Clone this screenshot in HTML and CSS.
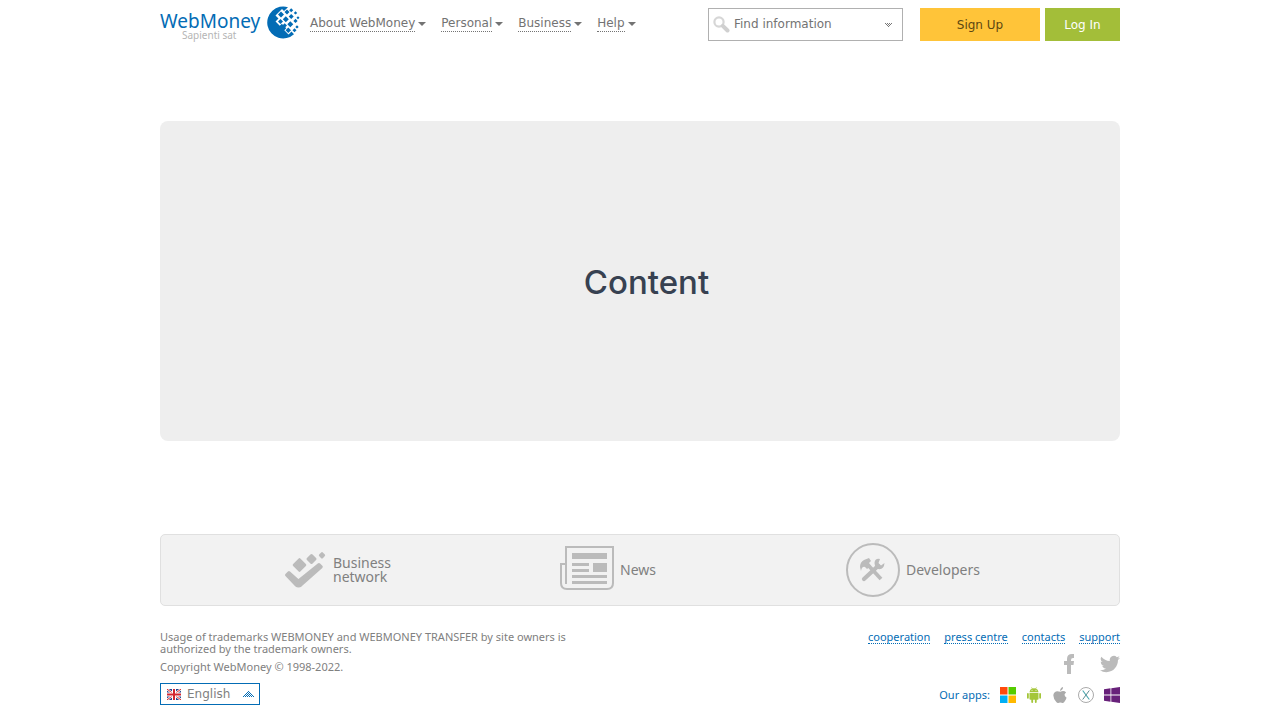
FILE: index.html
```html
<!DOCTYPE html>
<html lang="en">
<head>
<meta charset="utf-8">
<title>WebMoney</title>
<link rel="stylesheet" href="styles.css">
</head>
<body>
<div class="page">
  <header class="header">
    <a class="logo" href="#">
      <span class="logo-text"><span class="logo-name">WebMoney</span><span class="logo-tag">Sapienti sat</span></span>
      <svg class="logo-globe" viewBox="0 0 34 34" aria-hidden="true">
        <path fill="#036cb5" d="M22 1.200A16 16 0 1 0 28 28.300L25.500 25.500 22.500 28.500 18.300 24.300 20.300 22.300 15.800 17.800 13.800 19.800 9.500 15.500 12.500 12.500 9.500 9.500 13.500 5.500 16 3 18 5Z"/>
        <path fill="#036cb5" d="M15 5.500l3 3-3 3-3-3zM21 3.500l2.500 2.500-2.500 2.500-2.500-2.500zM19.800 10.300l3 3-3 3-3-3zM14.500 13l2.500 2.500-2.500 2.500-2.500-2.500zM25.200 8l2.500 2.500-2.500 2.500-2.500-2.500zM24.300 15.200l3 3-3 3-3-3zM22.300 21.500l2.700 2.700-2.700 2.700-2.700-2.700zM18.700 17.200l2.300 2.300-2.300 2.300-2.300-2.300z"/>
        <path fill="#036cb5" d="M25.200 2.200l2 2-2 2-2-2zM29.500 5.200l1.700 1.700-1.700 1.700-1.700-1.700zM29.500 12.800l2.100 2.100-2.100 2.100-2.100-2.100zM32 10.300l1.500 1.500-1.500 1.500-1.500-1.500zM31 19.200l1.700 1.700-1.700 1.700-1.700-1.700zM28.500 22.200l2 2-2 2-2-2z"/>
      </svg>
    </a>
    <nav class="nav">
      <a href="#"><span>About WebMoney</span></a>
      <a href="#"><span>Personal</span></a>
      <a href="#"><span>Business</span></a>
      <a href="#"><span>Help</span></a>
    </nav>
    <form class="search">
      <svg class="search-icon" viewBox="0 0 17 17" aria-hidden="true"><circle cx="6" cy="6" r="4.600" fill="none" stroke="#d6d6d6" stroke-width="2.200"/><path d="M9.800 9.800l4.700 4.700" stroke="#d0d0d0" stroke-width="4" stroke-linecap="round"/></svg>
      <input type="text" placeholder="Find information" aria-label="Find information">
      <button type="button" class="search-more" aria-label="Search options"><svg viewBox="0 0 7 4" shape-rendering="crispEdges"><path fill="#777" d="M0 0h1v1H0zM2 0h1v1H2zM4 0h1v1H4zM6 0h1v1H6zM1 1h1v1H1zM3 1h1v1H3zM5 1h1v1H5zM2 2h1v1H2zM4 2h1v1H4zM3 3h1v1H3z"/></svg></button>
    </form>
    <div class="actions">
      <button type="button" class="sign-up">Sign Up</button>
      <button type="button" class="log-in">Log In</button>
    </div>
  </header>

  <main class="content">Content</main>

  <footer>
    <div class="services">
      <a class="service" href="#">
        <svg class="network-icon" viewBox="0 0 42 38" aria-hidden="true"><g fill="#bbb" stroke="#bbb" stroke-width="3" stroke-linejoin="round"><path d="M15 8.700l5.300 5.300-5.300 5.300-5.300-5.300z"/><path d="M27 4.500l3.500 3.500-3.500 3.500-3.500-3.500z"/><path d="M37.500 2.700l1.600 1.600-1.600 1.600-1.600-1.600z"/><path d="M4.500 21.500l9.500 8.500 20.500-16.500 2.300 2.300L16.500 34q-2.500 2-5 0L2 24z"/></g></svg>
        <span>Business<br>network</span>
      </a>
      <a class="service" href="#">
        <svg class="news-icon" viewBox="0 0 54 44" aria-hidden="true"><path fill="none" stroke="#bbb" stroke-width="2" d="M6 38V1h47v36q0 6-6 6H7q-6 0-6-6V18h5"/><path fill="#bbb" d="M12 7h35v6H12zM12 17h17v3H12zM12 23h17v3H12zM33 17h14v9H33zM12 29h35v3H12zM12 35h35v3H12z"/></svg>
        <span>News</span>
      </a>
      <a class="service" href="#">
        <svg class="dev-icon" viewBox="0 0 54 54" aria-hidden="true"><circle cx="27" cy="27" r="26" fill="none" stroke="#bbb" stroke-width="2"/><g fill="none" stroke="#bbb"><path stroke-width="4.200" stroke-linecap="round" d="M18 36l14-13"/><path stroke-width="3.800" d="M22 22l13 14"/></g><path fill="#bbb" d="M14 24q0-5 4-7l5-2 2 3-2 2 2 3-4 3-2-2q-3-1-4 4zM34 16q-5-1-5.500 4l.5 3 3 3q6 1 6.500-6l-3.500 2.500-2.500-2.500z"/></svg>
        <span>Developers</span>
      </a>
    </div>

    <div class="legal">
      <div class="legal-text">
        <p>Usage of trademarks WEBMONEY and WEBMONEY TRANSFER by site owners is<br>authorized by the trademark owners.</p>
        <p>Copyright WebMoney © 1998-2022.</p>
        <button type="button" class="language">
          <svg class="flag" viewBox="0 0 14 11" aria-hidden="true"><path fill="#27448c" d="M0 0h14v11H0z"/><path stroke="#fff" stroke-width="2.200" d="M0 0l14 11M14 0L0 11"/><path stroke="#d22" d="M0 0l14 11M14 0L0 11"/><path stroke="#fff" stroke-width="4" d="M7 0v11M0 5.500h14"/><path stroke="#d22630" stroke-width="2" d="M7 0v11M0 5.500h14"/></svg>
          <span>English</span>
          <svg class="up" viewBox="0 0 11 6" shape-rendering="crispEdges" aria-hidden="true"><path fill="#036cb5" d="M5 0h1v1H5zM4 1h1v1H4zM6 1h1v1H6zM3 2h1v1H3zM5 2h1v1H5zM7 2h1v1H7zM2 3h1v1H2zM4 3h1v1H4zM6 3h1v1H6zM8 3h1v1H8zM1 4h1v1H1zM3 4h1v1H3zM5 4h1v1H5zM7 4h1v1H7zM9 4h1v1H9zM0 5h1v1H0zM2 5h1v1H2zM4 5h1v1H4zM6 5h1v1H6zM8 5h1v1H8zM10 5h1v1h-1z"/></svg>
        </button>
      </div>
      <div class="legal-side">
        <div class="links"><a href="#">cooperation</a><a href="#">press centre</a><a href="#">contacts</a><a href="#">support</a></div>
        <div class="social">
          <a href="#" aria-label="Facebook"><svg width="12" height="20" viewBox="0 0 12 20"><path fill="#bbb" d="M3 20v-9H0V7h3V5q0-5 5-5h2v4H9Q7 4 7 6v1h3l-.5 4H7v9z"/></svg></a>
          <a href="#" aria-label="Twitter"><svg width="20" height="18" viewBox="0 2 24 20"><path fill="#bbb" d="M23.950 4.570a10 10 0 0 1-2.820.770 4.960 4.960 0 0 0 2.160-2.720c-.950.550-2 .950-3.130 1.180a4.920 4.920 0 0 0-8.380 4.480A13.930 13.930 0 0 1 1.640 3.160a4.920 4.920 0 0 0 1.520 6.570 4.900 4.900 0 0 1-2.230-.610v.060a4.920 4.920 0 0 0 3.950 4.830 5 5 0 0 1-2.210.080 4.940 4.940 0 0 0 4.600 3.420A9.870 9.870 0 0 1 0 19.540a13.990 13.990 0 0 0 7.550 2.210c9.050 0 14-7.500 14-13.980 0-.210 0-.420-.020-.630a9.940 9.940 0 0 0 2.460-2.550z"/></svg></a>
        </div>
        <div class="apps">
          <span>Our apps:</span>
          <a href="#" aria-label="Microsoft"><svg width="16" height="16" viewBox="0 0 16 16"><path fill="#ff4a0c" d="M0 0h7.500v7.500H0z"/><path fill="#5c0" d="M8.500 0H16v7.500H8.500z"/><path fill="#00aff5" d="M0 8.500h7.500V16H0z"/><path fill="#ffb900" d="M8.500 8.500H16V16H8.500z"/></svg></a>
          <a href="#" aria-label="Android"><svg width="16" height="16" viewBox="0 0 16 16"><path fill="#a4c639" d="M3.500 5q.4-2.500 2.500-3.400L5.200.5 5.700.2l.9 1.200q1.400-.4 2.800 0L10.300.2l.5.300-.8 1.100Q12.100 2.500 12.500 5zM3.500 5.700h9v6.300q0 .8-1 .8h-.8V15q0 1-.9 1t-.9-1v-2.200H7.100V15q0 1-.9 1t-.9-1v-2.200h-.8q-1 0-1-.8zM1 7q0-1 .9-1t.9 1v3.700q0 1-.9 1t-.9-1zM13.200 7q0-1 .9-1t.9 1v3.700q0 1-.9 1t-.9-1z"/><circle cx="6" cy="3.300" r=".5" fill="#fff"/><circle cx="10" cy="3.300" r=".5" fill="#fff"/></svg></a>
          <a href="#" aria-label="Apple"><svg width="16" height="16" viewBox="0 0 16 16"><path fill="#aaa" d="M11 0q.2 3-2.900 4Q7.900 1 11 0zM8.300 4.700q3.700-1.600 5.800.7-3.400 2.400.5 5.400-.8 2.300-2.500 4.500-1 1-2.500.4-1.300-.5-2.600 0-1.600.7-2.700-.6Q1 11.200 1.400 7.700 2.100 4.300 5.500 4.200q1 .1 2.800.5z"/></svg></a>
          <a href="#" aria-label="OS X"><svg width="16" height="16" viewBox="0 0 16 16"><circle cx="8" cy="8" r="7.500" fill="#fff" stroke="#aaa"/><path fill="none" stroke="#45a5ad" stroke-width="1.100" d="M4.700 3.500l6.600 9"/><path stroke="#5d8c91" stroke-width="1" d="M11.300 3.500l-6.600 9"/></svg></a>
          <a href="#" aria-label="Windows"><svg width="16" height="16" viewBox="0 0 16 16"><path fill="#68217a" d="M0 2.200l6.500-.9v6.300H0zM7.300 1.200L16 0v7.600H7.300zM0 8.400h6.500v6.300L0 13.800zM7.300 8.400H16V16l-8.700-1.200z"/></svg></a>
        </div>
      </div>
    </div>
  </footer>
</div>
</body>
</html>
```
FILE: styles.css
```css
* { box-sizing: border-box; }
body { margin: 0; background: #fff; color: #737373; font: 12px/16px "DejaVu Sans", Verdana, sans-serif; }
a { color: inherit; text-decoration: none; }
svg { display: block; }
button { font: inherit; border: 0; cursor: pointer; }
p { margin: 0; }
.page { max-width: 960px; margin: 0 auto; padding-bottom: 14px; }

.header { display: flex; align-items: flex-start; height: 49px; padding-top: 8px; }
.logo { display: flex; gap: 8px; width: 150px; margin-top: -2px; }
.logo-text { display: flex; flex-direction: column; width: 98px; padding-top: 6px; font-family: "Noto Sans", sans-serif; }
.logo-name { font-size: 19px; line-height: 19px; color: #036cb5; }
.logo-tag { font-size: 10px; line-height: 9px; color: #b5b5b5; padding-left: 22px; }
.logo-globe { width: 34px; height: 34px; }
.nav { display: flex; gap: 15px; margin-top: 8px; }
.nav a { display: flex; align-items: center; gap: 3px; }
.nav span { border-bottom: 1px dotted #737373; line-height: 15px; }
.nav a::after { content: ""; border: 4px solid transparent; border-top-color: #737373; border-bottom: 0; }
.search { display: flex; align-items: center; width: 195px; height: 33px; margin-left: auto; padding: 0 5px 0 4px; border: 1px solid #b0b0b0; }
.search-icon { width: 17px; height: 17px; }
.search input { flex: 1; min-width: 0; padding: 0 0 2px 4px; border: 0; outline: 0; font: inherit; color: #737373; }
.search input::placeholder { color: #737373; opacity: 1; }
.search-more { padding: 5px; background: none; }
.search-more svg { width: 7px; height: 4px; }
.actions { display: flex; gap: 5px; margin-left: 17px; }
.actions button { height: 33px; }
.sign-up { width: 120px; background: #ffc439; color: #5c4712; }
.log-in { width: 75px; background: #a3be39; color: #fff; }

.content { display: flex; align-items: center; justify-content: center; height: 320px; margin-top: 72px; padding: 2px 0 0 13px; border-radius: 8px; background: #eee; color: #374151; font: 500 33px/40px Inter, sans-serif; }

.services { display: grid; grid-template-columns: 276px 286px 1fr; height: 72px; margin-top: 93px; padding-left: 123px; border: 1px solid #e0e0e0; border-radius: 5px; background: #f2f2f2; }
.service { display: flex; align-items: center; gap: 6px; font: 14px/14px "Noto Sans", sans-serif; color: #808080; padding-bottom: 1px; }
.network-icon { width: 43px; height: 38px; }
.news-icon { width: 54px; height: 44px; margin-top: -3px; }
.dev-icon { width: 54px; height: 54px; }

.legal { display: flex; justify-content: space-between; margin-top: 25px; font: 11px/12px "Noto Sans", sans-serif; color: #808080; }
.legal-text p { margin-bottom: 6px; }
.language { display: flex; align-items: center; width: 100px; height: 22px; margin-top: 10px; padding: 0 5px 0 6px; border: 1px solid #036cb5; background: #fff; color: #808080; font: 12px/16px "DejaVu Sans", Verdana, sans-serif; }
.flag { width: 14px; height: 11px; margin-right: 6px; }
.up { width: 11px; height: 6px; margin-left: auto; }
.legal-side { display: flex; flex-direction: column; align-items: flex-end; color: #036cb5; }
.links { display: flex; gap: 14px; }
.links a { border-bottom: 1px dotted #036cb5; }
.social { display: flex; align-items: center; gap: 24px; margin-top: 10px; }
.apps { display: flex; align-items: center; gap: 10px; margin-top: 13px; }
```
